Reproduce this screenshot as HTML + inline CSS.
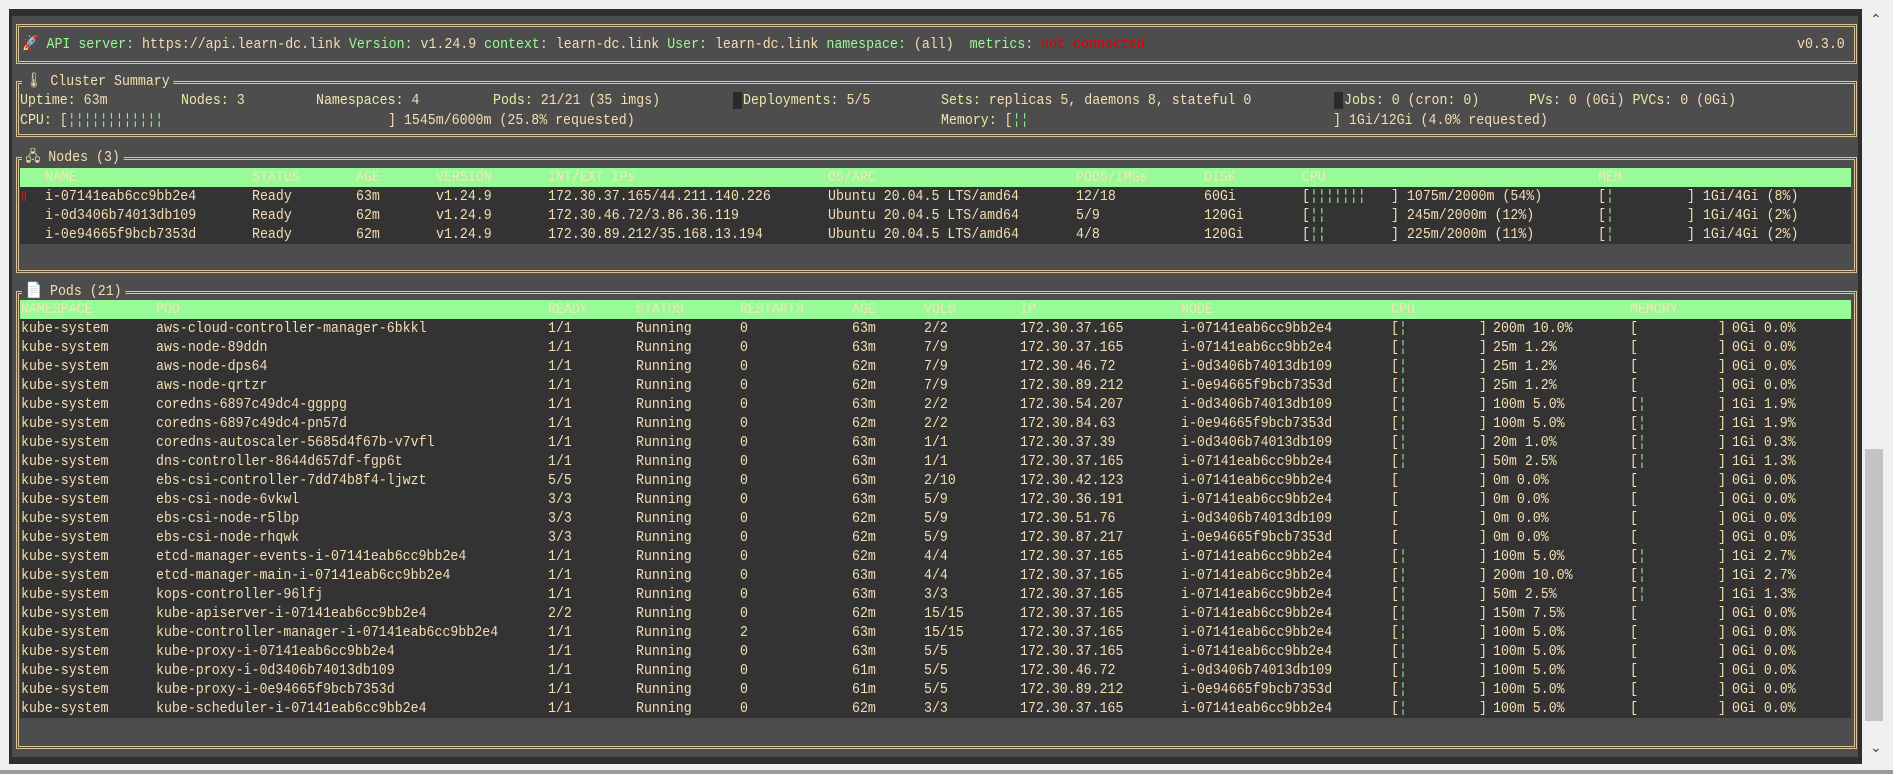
<!DOCTYPE html>
<html><head><meta charset="utf-8"><style>
*{margin:0;padding:0;box-sizing:border-box}
body{width:1893px;height:774px;background:#f0f0f0;position:relative;overflow:hidden;font-family:"Liberation Mono","DejaVu Sans Mono",monospace;font-size:15px;color:#f5deb3}
#outer{position:absolute;left:9px;top:9px;width:1853px;height:755px;background:#2e2e2e}
#inner{position:absolute;left:12px;top:16px;width:1846px;height:741px;background:#4d4d4d}
.box{position:absolute;border:3px double #d6c39a}
.t{position:absolute;white-space:pre;line-height:19px;height:19px;transform:scaleX(.884);transform-origin:left}
.ttl{position:absolute;background:#4d4d4d;padding:0 4px;white-space:pre;line-height:19px;transform:scaleX(.884);transform-origin:left}
.g{color:#98fb98}.k{color:#eee8aa}.b{color:#90ee90}
.tbl{position:absolute;left:20px;width:1831px;background:#333}
.hd{position:absolute;left:20px;width:1831px;height:19px;background:#98fb98;color:#f5deb3}
.r{position:absolute;left:0;height:19px;width:100%}
.r>span,.hd>span{position:absolute;white-space:pre;line-height:19px;transform:scaleX(.884);transform-origin:left}
.a{left:21px}.b1{left:156px}.c{left:548px}.d{left:636px}.e{left:740px}.f{left:852px}.h{left:924px}.i{left:1020px}.j{left:1181px}.l{left:1391px}.m{left:1479px}.n{left:1493px}.o{left:1630px}.p{left:1718px}.q{left:1732px}
.hd>span{color:#f5e6b3}
#sb{position:absolute;left:1865px;top:449px;width:18px;height:272px;background:#c3c3c3}
.sq{position:absolute;width:9px;height:17px;background:#2a2a2a}
</style></head><body>
<div id="outer"></div><div id="inner"></div>
<div style="position:absolute;left:1862px;top:0;width:31px;height:774px;background:#f0f0f0"></div>
<div style="position:absolute;left:1870px;top:12px;font-size:14px;color:#444;font-family:'DejaVu Sans',sans-serif">&#8963;</div>
<div style="position:absolute;left:1870px;top:740px;font-size:14px;color:#444;font-family:'DejaVu Sans',sans-serif">&#8964;</div>
<div id="sb"></div>
<div style="position:absolute;left:0;top:770px;width:1893px;height:4px;background:#9a9a9a"></div>

<!-- header -->
<div class="box" style="left:16px;top:24px;width:1841px;height:40px"></div>
<div class="t" style="left:22px;top:35px"><span style="color:#ccc">&#x1F680;</span> <span class="g">API server:</span> https://api.learn-dc.link <span class="g">Version:</span> v1.24.9 <span class="g">context:</span> learn-dc.link <span class="g">User:</span> learn-dc.link <span class="g">namespace:</span> (all)  <span class="g">metrics:</span> <span style="color:#e00000">not connected</span></div>
<div class="t" style="left:1797px;top:35px">v0.3.0</div>

<!-- cluster summary -->
<div class="box" style="left:16px;top:81px;width:1841px;height:56px"></div>
<div class="ttl" style="left:22px;top:72px">&#x1F321; Cluster Summary</div>
<div class="t" style="left:20px;top:91px"><span class="k">Uptime:</span> 63m</div>
<div class="t" style="left:181px;top:91px"><span class="k">Nodes:</span> 3</div>
<div class="t" style="left:316px;top:91px"><span class="k">Namespaces:</span> 4</div>
<div class="t" style="left:493px;top:91px"><span class="k">Pods:</span> 21/21 (35 imgs)</div>
<div class="sq" style="left:733px;top:92px"></div>
<div class="t" style="left:743px;top:91px"><span class="k">Deployments:</span> 5/5</div>
<div class="t" style="left:941px;top:91px"><span class="k">Sets:</span> replicas 5, daemons 8, stateful 0</div>
<div class="sq" style="left:1334px;top:92px"></div>
<div class="t" style="left:1344px;top:91px"><span class="k">Jobs:</span> 0 (cron: 0)</div>
<div class="t" style="left:1529px;top:91px"><span class="k">PVs:</span> 0 (0Gi) <span class="k">PVCs:</span> 0 (0Gi)</div>
<div class="t" style="left:20px;top:111px"><span class="k">CPU:</span> [<span class="b">¦¦¦¦¦¦¦¦¦¦¦¦</span></div>
<div class="t" style="left:388px;top:111px">] 1545m/6000m (25.8% requested)</div>
<div class="t" style="left:941px;top:111px"><span class="k">Memory:</span> [<span class="b">¦¦</span></div>
<div class="t" style="left:1333px;top:111px">] 1Gi/12Gi (4.0% requested)</div>

<!-- nodes -->
<div class="box" style="left:16px;top:157px;width:1841px;height:116px"></div>
<div class="ttl" style="left:22px;top:148px">&#x1F5A7; Nodes (3)</div>
<div class="hd" style="top:168px"><span style="left:25px">NAME</span><span style="left:232px">STATUS</span><span style="left:336px">AGE</span><span style="left:416px">VERSION</span><span style="left:528px">INT/EXT IPs</span><span style="left:808px">OS/ARC</span><span style="left:1056px">PODS/IMGs</span><span style="left:1184px">DISK</span><span style="left:1282px">CPU</span><span style="left:1578px">MEM</span></div>
<div class="tbl" style="top:187px;height:57px">
<div class="r" style="top:0"><span style="left:0;color:#d22;font-weight:bold">▯</span><span style="left:25px">i-07141eab6cc9bb2e4</span><span style="left:232px">Ready</span><span style="left:336px">63m</span><span style="left:416px">v1.24.9</span><span style="left:528px">172.30.37.165/44.211.140.226</span><span style="left:808px">Ubuntu 20.04.5 LTS/amd64</span><span style="left:1056px">12/18</span><span style="left:1184px">60Gi</span><span style="left:1282px">[<span class="b">¦¦¦¦¦¦¦</span></span><span style="left:1371px">] 1075m/2000m (54%)</span><span style="left:1578px">[<span class="b">¦</span></span><span style="left:1667px">] 1Gi/4Gi (8%)</span></div>
<div class="r" style="top:19px"><span style="left:25px">i-0d3406b74013db109</span><span style="left:232px">Ready</span><span style="left:336px">62m</span><span style="left:416px">v1.24.9</span><span style="left:528px">172.30.46.72/3.86.36.119</span><span style="left:808px">Ubuntu 20.04.5 LTS/amd64</span><span style="left:1056px">5/9</span><span style="left:1184px">120Gi</span><span style="left:1282px">[<span class="b">¦¦</span></span><span style="left:1371px">] 245m/2000m (12%)</span><span style="left:1578px">[<span class="b">¦</span></span><span style="left:1667px">] 1Gi/4Gi (2%)</span></div>
<div class="r" style="top:38px"><span style="left:25px">i-0e94665f9bcb7353d</span><span style="left:232px">Ready</span><span style="left:336px">62m</span><span style="left:416px">v1.24.9</span><span style="left:528px">172.30.89.212/35.168.13.194</span><span style="left:808px">Ubuntu 20.04.5 LTS/amd64</span><span style="left:1056px">4/8</span><span style="left:1184px">120Gi</span><span style="left:1282px">[<span class="b">¦¦</span></span><span style="left:1371px">] 225m/2000m (11%)</span><span style="left:1578px">[<span class="b">¦</span></span><span style="left:1667px">] 1Gi/4Gi (2%)</span></div>
</div>

<!-- pods -->
<div class="box" style="left:16px;top:291px;width:1841px;height:458px"></div>
<div class="ttl" style="left:22px;top:282px">&#x1F4C4; Pods (21)</div>
<div style="position:absolute;left:20px;top:300px;width:1831px;height:19px;background:#98fb98"></div>
<div class="hd" style="top:300px;left:0;width:1851px;background:transparent"><span class="a">NAMESPACE</span><span class="b1">POD</span><span class="c">READY</span><span class="d">STATUS</span><span class="e">RESTARTS</span><span class="f">AGE</span><span class="h">VOLS</span><span class="i">IP</span><span class="j">NODE</span><span class="l">CPU</span><span class="o">MEMORY</span></div>
<div style="position:absolute;left:20px;top:319px;width:1831px;height:399px;background:#333"></div>
<div style="position:absolute;left:0;top:319px;width:1851px;height:399px">
<div class="r" style="top:0"><span class="a">kube-system</span><span class="b1">aws-cloud-controller-manager-6bkkl</span><span class="c">1/1</span><span class="d">Running</span><span class="e">0</span><span class="f">63m</span><span class="h">2/2</span><span class="i">172.30.37.165</span><span class="j">i-07141eab6cc9bb2e4</span><span class="l">[<span class="b">¦</span></span><span class="m">]</span><span class="n">200m 10.0%</span><span class="o">[</span><span class="p">]</span><span class="q">0Gi 0.0%</span></div>
<div class="r" style="top:19px"><span class="a">kube-system</span><span class="b1">aws-node-89ddn</span><span class="c">1/1</span><span class="d">Running</span><span class="e">0</span><span class="f">63m</span><span class="h">7/9</span><span class="i">172.30.37.165</span><span class="j">i-07141eab6cc9bb2e4</span><span class="l">[<span class="b">¦</span></span><span class="m">]</span><span class="n">25m 1.2%</span><span class="o">[</span><span class="p">]</span><span class="q">0Gi 0.0%</span></div>
<div class="r" style="top:38px"><span class="a">kube-system</span><span class="b1">aws-node-dps64</span><span class="c">1/1</span><span class="d">Running</span><span class="e">0</span><span class="f">62m</span><span class="h">7/9</span><span class="i">172.30.46.72</span><span class="j">i-0d3406b74013db109</span><span class="l">[<span class="b">¦</span></span><span class="m">]</span><span class="n">25m 1.2%</span><span class="o">[</span><span class="p">]</span><span class="q">0Gi 0.0%</span></div>
<div class="r" style="top:57px"><span class="a">kube-system</span><span class="b1">aws-node-qrtzr</span><span class="c">1/1</span><span class="d">Running</span><span class="e">0</span><span class="f">62m</span><span class="h">7/9</span><span class="i">172.30.89.212</span><span class="j">i-0e94665f9bcb7353d</span><span class="l">[<span class="b">¦</span></span><span class="m">]</span><span class="n">25m 1.2%</span><span class="o">[</span><span class="p">]</span><span class="q">0Gi 0.0%</span></div>
<div class="r" style="top:76px"><span class="a">kube-system</span><span class="b1">coredns-6897c49dc4-ggppg</span><span class="c">1/1</span><span class="d">Running</span><span class="e">0</span><span class="f">63m</span><span class="h">2/2</span><span class="i">172.30.54.207</span><span class="j">i-0d3406b74013db109</span><span class="l">[<span class="b">¦</span></span><span class="m">]</span><span class="n">100m 5.0%</span><span class="o">[<span class="b">¦</span></span><span class="p">]</span><span class="q">1Gi 1.9%</span></div>
<div class="r" style="top:95px"><span class="a">kube-system</span><span class="b1">coredns-6897c49dc4-pn57d</span><span class="c">1/1</span><span class="d">Running</span><span class="e">0</span><span class="f">62m</span><span class="h">2/2</span><span class="i">172.30.84.63</span><span class="j">i-0e94665f9bcb7353d</span><span class="l">[<span class="b">¦</span></span><span class="m">]</span><span class="n">100m 5.0%</span><span class="o">[<span class="b">¦</span></span><span class="p">]</span><span class="q">1Gi 1.9%</span></div>
<div class="r" style="top:114px"><span class="a">kube-system</span><span class="b1">coredns-autoscaler-5685d4f67b-v7vfl</span><span class="c">1/1</span><span class="d">Running</span><span class="e">0</span><span class="f">63m</span><span class="h">1/1</span><span class="i">172.30.37.39</span><span class="j">i-0d3406b74013db109</span><span class="l">[<span class="b">¦</span></span><span class="m">]</span><span class="n">20m 1.0%</span><span class="o">[<span class="b">¦</span></span><span class="p">]</span><span class="q">1Gi 0.3%</span></div>
<div class="r" style="top:133px"><span class="a">kube-system</span><span class="b1">dns-controller-8644d657df-fgp6t</span><span class="c">1/1</span><span class="d">Running</span><span class="e">0</span><span class="f">63m</span><span class="h">1/1</span><span class="i">172.30.37.165</span><span class="j">i-07141eab6cc9bb2e4</span><span class="l">[<span class="b">¦</span></span><span class="m">]</span><span class="n">50m 2.5%</span><span class="o">[<span class="b">¦</span></span><span class="p">]</span><span class="q">1Gi 1.3%</span></div>
<div class="r" style="top:152px"><span class="a">kube-system</span><span class="b1">ebs-csi-controller-7dd74b8f4-ljwzt</span><span class="c">5/5</span><span class="d">Running</span><span class="e">0</span><span class="f">63m</span><span class="h">2/10</span><span class="i">172.30.42.123</span><span class="j">i-07141eab6cc9bb2e4</span><span class="l">[</span><span class="m">]</span><span class="n">0m 0.0%</span><span class="o">[</span><span class="p">]</span><span class="q">0Gi 0.0%</span></div>
<div class="r" style="top:171px"><span class="a">kube-system</span><span class="b1">ebs-csi-node-6vkwl</span><span class="c">3/3</span><span class="d">Running</span><span class="e">0</span><span class="f">63m</span><span class="h">5/9</span><span class="i">172.30.36.191</span><span class="j">i-07141eab6cc9bb2e4</span><span class="l">[</span><span class="m">]</span><span class="n">0m 0.0%</span><span class="o">[</span><span class="p">]</span><span class="q">0Gi 0.0%</span></div>
<div class="r" style="top:190px"><span class="a">kube-system</span><span class="b1">ebs-csi-node-r5lbp</span><span class="c">3/3</span><span class="d">Running</span><span class="e">0</span><span class="f">62m</span><span class="h">5/9</span><span class="i">172.30.51.76</span><span class="j">i-0d3406b74013db109</span><span class="l">[</span><span class="m">]</span><span class="n">0m 0.0%</span><span class="o">[</span><span class="p">]</span><span class="q">0Gi 0.0%</span></div>
<div class="r" style="top:209px"><span class="a">kube-system</span><span class="b1">ebs-csi-node-rhqwk</span><span class="c">3/3</span><span class="d">Running</span><span class="e">0</span><span class="f">62m</span><span class="h">5/9</span><span class="i">172.30.87.217</span><span class="j">i-0e94665f9bcb7353d</span><span class="l">[</span><span class="m">]</span><span class="n">0m 0.0%</span><span class="o">[</span><span class="p">]</span><span class="q">0Gi 0.0%</span></div>
<div class="r" style="top:228px"><span class="a">kube-system</span><span class="b1">etcd-manager-events-i-07141eab6cc9bb2e4</span><span class="c">1/1</span><span class="d">Running</span><span class="e">0</span><span class="f">62m</span><span class="h">4/4</span><span class="i">172.30.37.165</span><span class="j">i-07141eab6cc9bb2e4</span><span class="l">[<span class="b">¦</span></span><span class="m">]</span><span class="n">100m 5.0%</span><span class="o">[<span class="b">¦</span></span><span class="p">]</span><span class="q">1Gi 2.7%</span></div>
<div class="r" style="top:247px"><span class="a">kube-system</span><span class="b1">etcd-manager-main-i-07141eab6cc9bb2e4</span><span class="c">1/1</span><span class="d">Running</span><span class="e">0</span><span class="f">63m</span><span class="h">4/4</span><span class="i">172.30.37.165</span><span class="j">i-07141eab6cc9bb2e4</span><span class="l">[<span class="b">¦</span></span><span class="m">]</span><span class="n">200m 10.0%</span><span class="o">[<span class="b">¦</span></span><span class="p">]</span><span class="q">1Gi 2.7%</span></div>
<div class="r" style="top:266px"><span class="a">kube-system</span><span class="b1">kops-controller-96lfj</span><span class="c">1/1</span><span class="d">Running</span><span class="e">0</span><span class="f">63m</span><span class="h">3/3</span><span class="i">172.30.37.165</span><span class="j">i-07141eab6cc9bb2e4</span><span class="l">[<span class="b">¦</span></span><span class="m">]</span><span class="n">50m 2.5%</span><span class="o">[<span class="b">¦</span></span><span class="p">]</span><span class="q">1Gi 1.3%</span></div>
<div class="r" style="top:285px"><span class="a">kube-system</span><span class="b1">kube-apiserver-i-07141eab6cc9bb2e4</span><span class="c">2/2</span><span class="d">Running</span><span class="e">0</span><span class="f">62m</span><span class="h">15/15</span><span class="i">172.30.37.165</span><span class="j">i-07141eab6cc9bb2e4</span><span class="l">[<span class="b">¦</span></span><span class="m">]</span><span class="n">150m 7.5%</span><span class="o">[</span><span class="p">]</span><span class="q">0Gi 0.0%</span></div>
<div class="r" style="top:304px"><span class="a">kube-system</span><span class="b1">kube-controller-manager-i-07141eab6cc9bb2e4</span><span class="c">1/1</span><span class="d">Running</span><span class="e">2</span><span class="f">63m</span><span class="h">15/15</span><span class="i">172.30.37.165</span><span class="j">i-07141eab6cc9bb2e4</span><span class="l">[<span class="b">¦</span></span><span class="m">]</span><span class="n">100m 5.0%</span><span class="o">[</span><span class="p">]</span><span class="q">0Gi 0.0%</span></div>
<div class="r" style="top:323px"><span class="a">kube-system</span><span class="b1">kube-proxy-i-07141eab6cc9bb2e4</span><span class="c">1/1</span><span class="d">Running</span><span class="e">0</span><span class="f">63m</span><span class="h">5/5</span><span class="i">172.30.37.165</span><span class="j">i-07141eab6cc9bb2e4</span><span class="l">[<span class="b">¦</span></span><span class="m">]</span><span class="n">100m 5.0%</span><span class="o">[</span><span class="p">]</span><span class="q">0Gi 0.0%</span></div>
<div class="r" style="top:342px"><span class="a">kube-system</span><span class="b1">kube-proxy-i-0d3406b74013db109</span><span class="c">1/1</span><span class="d">Running</span><span class="e">0</span><span class="f">61m</span><span class="h">5/5</span><span class="i">172.30.46.72</span><span class="j">i-0d3406b74013db109</span><span class="l">[<span class="b">¦</span></span><span class="m">]</span><span class="n">100m 5.0%</span><span class="o">[</span><span class="p">]</span><span class="q">0Gi 0.0%</span></div>
<div class="r" style="top:361px"><span class="a">kube-system</span><span class="b1">kube-proxy-i-0e94665f9bcb7353d</span><span class="c">1/1</span><span class="d">Running</span><span class="e">0</span><span class="f">61m</span><span class="h">5/5</span><span class="i">172.30.89.212</span><span class="j">i-0e94665f9bcb7353d</span><span class="l">[<span class="b">¦</span></span><span class="m">]</span><span class="n">100m 5.0%</span><span class="o">[</span><span class="p">]</span><span class="q">0Gi 0.0%</span></div>
<div class="r" style="top:380px"><span class="a">kube-system</span><span class="b1">kube-scheduler-i-07141eab6cc9bb2e4</span><span class="c">1/1</span><span class="d">Running</span><span class="e">0</span><span class="f">62m</span><span class="h">3/3</span><span class="i">172.30.37.165</span><span class="j">i-07141eab6cc9bb2e4</span><span class="l">[<span class="b">¦</span></span><span class="m">]</span><span class="n">100m 5.0%</span><span class="o">[</span><span class="p">]</span><span class="q">0Gi 0.0%</span></div>
</div>
</body></html>
